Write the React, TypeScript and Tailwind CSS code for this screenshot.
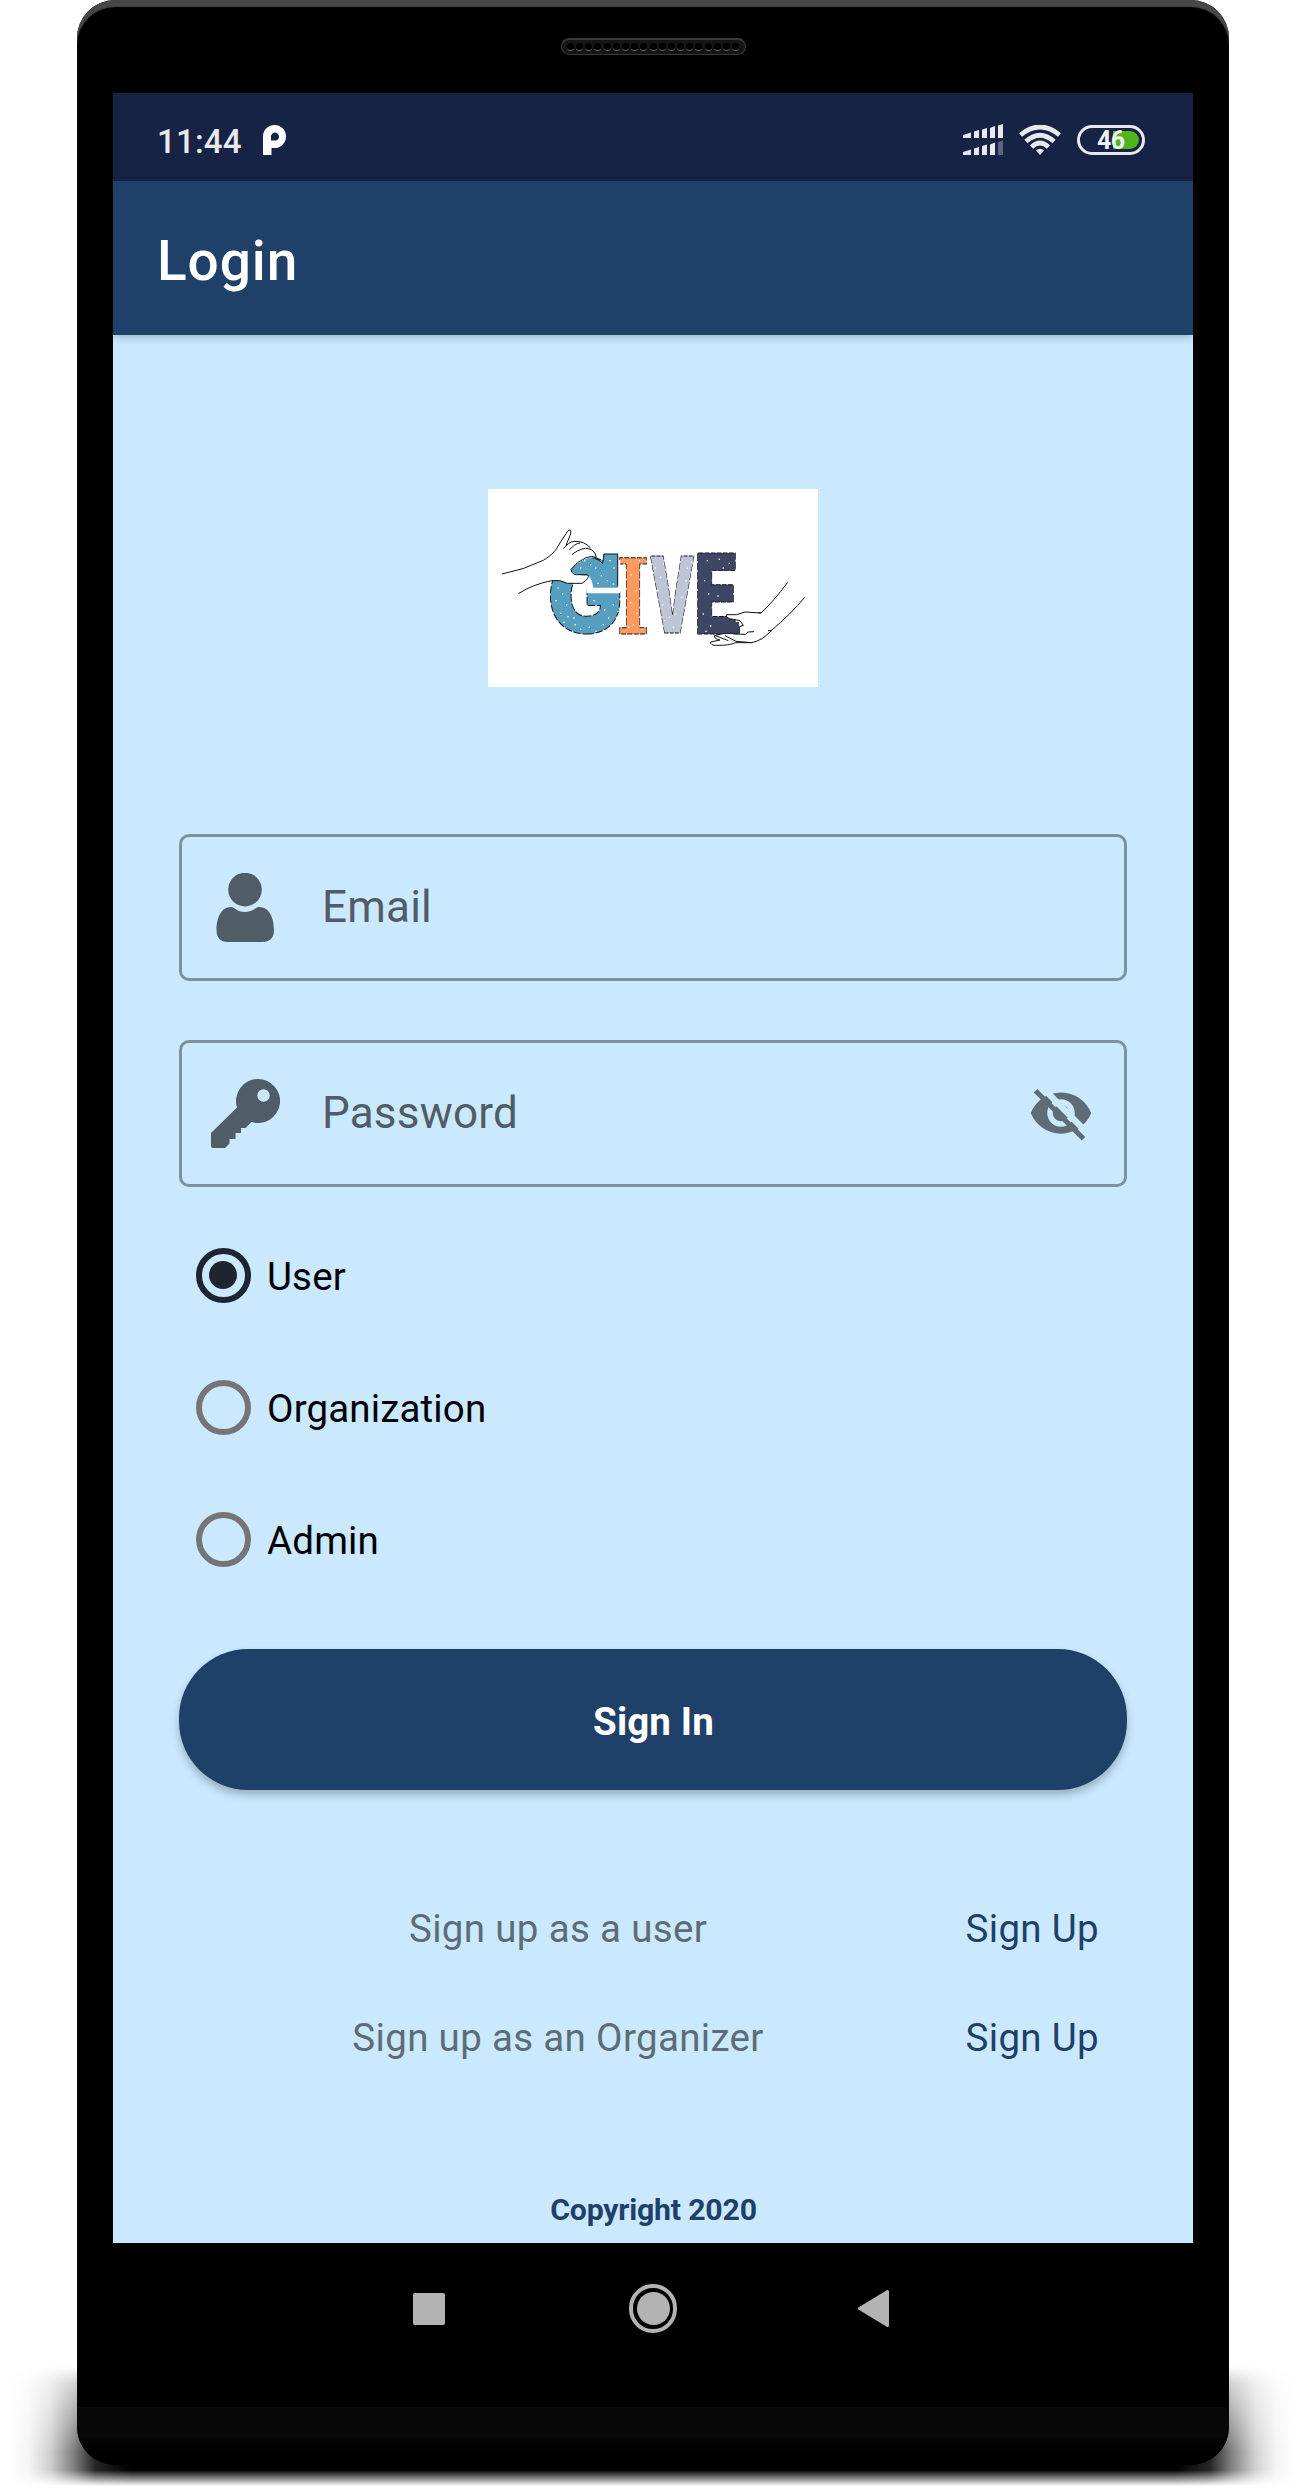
import React, { useState } from "react";

const SPECKS: [number, number][] = [
  [312, 240], [330, 252], [300, 262], [345, 262], [388, 240], [400, 262], [362, 285], [380, 300], [352, 308], [398, 310],
  [232, 322], [246, 340], [226, 360], [258, 372], [240, 398], [262, 408], [250, 425], [284, 432], [300, 446], [326, 440],
  [346, 452], [368, 432], [384, 412], [372, 388], [398, 372], [412, 392], [340, 360], [392, 436], [280, 412],
  [440, 248], [476, 240], [452, 282], [466, 330], [450, 366], [470, 398], [444, 440], [484, 446], [458, 432],
  [524, 262], [540, 290], [548, 250], [532, 330], [546, 372], [552, 420], [578, 440], [586, 400], [604, 350], [616, 300], [620, 262], [634, 244], [566, 410],
  [680, 240], [716, 236], [746, 248], [728, 262], [672, 300], [684, 340], [712, 346], [668, 400], [690, 436], [724, 446], [760, 440], [676, 452],
];

function GiveLogo() {
  return (
    <svg viewBox="24 27 990 594" className="block h-[198px] w-[330px] bg-white">
      <g strokeWidth="3" stroke="#111" strokeDasharray="22 6" fontWeight="900">
        <text transform="translate(201 459) scale(.98 1)" fontFamily="Inter" fontSize="310" fill="#569fc0">G</text>
        <text transform="translate(409 461) scale(.68 1)" fontFamily="DejaVu Serif" fontSize="316" fontWeight="700" fill="#ff9b60">I</text>
        <text transform="translate(507 459) scale(.55 1)" fontFamily="Inter" fontSize="318" fill="#bec5d6">V</text>
        <text transform="translate(643 463) scale(.65 1)" fontFamily="Inter" fontSize="332" fill="#3d4665">E</text>
      </g>
      <path fill="#fff" d="M413 240H421V340H320V323H413Z" />
      <path fill="#569fc0" d="M318 233Q346 228 368 250L372 222H413V323H340Q336 296 324 285Z" />
      <path fill="none" stroke="#111" strokeWidth="3" d="M318 233Q346 228 368 250L372 222H413V320" />
      <g fill="#fff">
        {SPECKS.map(([x, y]) => (
          <rect key={`${x}-${y}`} x={x} y={y} width="4" height="4" />
        ))}
      </g>
      <g fill="#fff" stroke="#111" strokeWidth="3" strokeLinejoin="round">
        <path
          stroke="none"
          d="M70 281Q130 268 190 241Q225 220 240 190L262 152Q272 148 272 160L264 190Q300 178 325 192Q345 205 349 232Q310 230 272 268Q276 288 322 285Q328 300 306 310L262 310Q240 298 216 302Q160 312 115 340Z"
        />
        <path
          fill="none"
          d="M66 282Q130 270 190 241Q225 220 236 195L262 155Q274 142 272 162L258 196M250 206Q266 186 282 184Q312 182 332 204M268 210Q285 190 300 189M276 223Q310 200 325 206Q345 210 349 232M349 232Q335 226 318 233Q290 245 273 268Q274 287 300 284L324 285M324 285Q330 294 306 310L262 310Q240 298 216 302Q160 312 115 341"
        />
        <path
          d="M923 307Q880 365 843 399L795 396L770 404L740 404Q736 416 760 418L780 422L790 436L778 440L778 460L730 461L704 466Q700 476 720 480L692 486Q690 496 710 496Q745 497 767 488L815 488Q850 480 870 455Q935 400 974 352"
        />
        <path fill="none" d="M843 399L834 398M735 467L768 484L815 488M822 455L804 456L796 463L760 462M704 466L745 482M864 452L876 452" />
      </g>
      <path fill="#3d4665" d="M700 426H777V460H700Z" />
    </svg>
  );
}

function UserIcon() {
  return (
    <svg viewBox="0 0 59 69" className="h-[69px] w-[59px] fill-[#505d66]">
      <circle cx="29" cy="16.6" r="16.8" />
      <path d="M15 34C18.5 34 20.5 39 29 39C37.500 39 39.500 34 43 34C54 34 58 46 58 57Q58 69 46 69H12Q.5 69 .5 57C.5 46 4.500 34 15 34Z" />
    </svg>
  );
}

function KeyIcon() {
  return (
    <svg viewBox="0 0 69 69" className="h-[69px] w-[69px] fill-[#505d66]">
      <path
        fillRule="evenodd"
        d="M47 0A22 22 0 1 1 40.500 43L34.500 49H30V54H24.500V60H18.500V64.500L14 69H2Q0 69 0 67V54L26 28.500A22 22 0 0 1 47 0ZM52.500 10.300A6.200 6.200 0 1 0 52.500 22.700A6.200 6.200 0 1 0 52.500 10.300Z"
      />
    </svg>
  );
}

function EyeOffIcon() {
  return (
    <svg viewBox="0 0 24 24" className="mb-0.5 h-[66px] w-[66px]">
      <path
        fill="#5e6c75"
        d="M12 4.500C7 4.500 2.730 7.610 1 12c1.730 4.390 6 7.500 11 7.500s9.270-3.110 11-7.500c-1.730-4.390-6-7.500-11-7.500zM12 17c-2.760 0-5-2.240-5-5s2.240-5 5-5 5 2.240 5 5-2.240 5-5 5zm0-8c-1.660 0-3 1.340-3 3s1.340 3 3 3 3-1.340 3-3-1.340-3-3-3z"
      />
      <path d="M4.600 2.100L22 19.700" stroke="#cae9ff" strokeWidth="2.300" />
      <path d="M2.750 3.900L20.200 21.400" stroke="#5e6c75" strokeWidth="1.800" />
    </svg>
  );
}

function StatusBar() {
  return (
    <div className="flex h-[88px] items-center bg-[#162345] pt-1.5 pr-12 pl-11">
      <span className="mt-[3px] text-[33px] leading-[40px] font-medium tracking-[.2px] text-[#e8e9ec]">11:44</span>
      <svg viewBox="0 0 23 30" className="ml-[21px] h-[30px] w-[23px]">
        <path fill="#fff" fillRule="evenodd" d="M0 30V11.500A11.500 11.500 0 1 1 11.500 23H8.500V30ZM8 15.500H11.500A4 4 0 1 0 8 11.500Z" />
      </svg>
      <svg viewBox="0 0 41 32" className="ml-auto h-8 w-[41px] fill-[#e8e9ec]">
        <path d="M0 11L8 8.500V14H0ZM11 7.500L16 6V14H11ZM19 5.500L24 4V14H19ZM27 4L32 2V14H27ZM35 1.500L40 0V14H35Z" />
        <path d="M0 28L8 25.500V31H0ZM11 24.500L16 23V31H11ZM19 22L24 20.500V31H19ZM27 20.500L32 18.500V31H27Z" />
        <path fill="#5c657e" d="M35 18L40 16.500V31H35Z" />
      </svg>
      <svg viewBox="0 0 42 30" className="ml-[15px] h-[30px] w-[42px]">
        <g fill="none" stroke="#e8e9ec" strokeWidth="4.800">
          <path d="M1.500 10Q21-6 40.500 10" />
          <path d="M7 16.500Q21 4 35 16.500" />
          <path d="M12.500 22Q21 14 29.500 22" />
        </g>
        <path fill="#e8e9ec" d="M17 25.500Q21 22 25 25.500L21 30Z" />
      </svg>
      <div className="relative ml-4 h-[30px] w-[68px] rounded-full border-[3px] border-[#e8e9ec]">
        <div className="absolute top-[3px] right-[3px] h-[18px] w-[26px] rounded-r-full bg-[#4fb51c]" />
        <span className="absolute top-0 left-[17px] text-[25px] leading-[25px] font-bold tracking-[-.5px] text-[#f0f2f3]">46</span>
      </div>
    </div>
  );
}

function Field({ icon, label, trailing }: { icon: React.ReactNode; label: string; trailing?: React.ReactNode }) {
  return (
    <div className="flex h-[147px] items-center rounded-[10px] border-[3px] border-[#7d919f] pr-[30px]">
      <div className="flex w-[140px] justify-center pr-[13px]">{icon}</div>
      <span className="mb-0.5 flex-1 text-[44px] leading-[52px] tracking-[.2px] text-[#505d66]">{label}</span>
      {trailing}
    </div>
  );
}

function Radio({ label, checked, onSelect }: { label: string; checked: boolean; onSelect: () => void }) {
  return (
    <button type="button" role="radio" aria-checked={checked} onClick={onSelect} className="flex h-[132px] items-center">
      <span
        className={
          checked
            ? "flex size-[55px] items-center justify-center rounded-full border-[6px] border-[#1e2430]"
            : "flex size-[55px] rounded-full border-[6px] border-[#757575]"
        }
      >
        {checked && <span className="size-7 rounded-full bg-[#1e2430]" />}
      </span>
      <span className="mt-[3px] ml-[16.500px] text-[38.5px] leading-[46px] tracking-[.15px] text-black">{label}</span>
    </button>
  );
}

function SignUpRow({ label }: { label: string }) {
  return (
    <div className="flex h-[109px] items-center whitespace-nowrap">
      <span className="w-[758px] shrink-0 text-center tracking-[.33px] text-[#5e6c75]">{label}</span>
      <a href="#" className="ml-[28.500px] tracking-[.33px] text-[#1f4068]">Sign Up</a>
    </div>
  );
}

export default function App() {
  const [role, setRole] = useState("User");
  return (
    <div className="relative h-[2490px] w-[1305px] overflow-hidden bg-white font-[Roboto,sans-serif]">
      <div className="absolute top-[2362px] left-0 h-[124px] w-full bg-[linear-gradient(to_right,transparent_8px,rgba(0,0,0,.04)_28px,rgba(0,0,0,.18)_50px,rgba(0,0,0,.5)_74px,rgba(0,0,0,.85)_95px,black_130px,black_1175px,rgba(0,0,0,.85)_1210px,rgba(0,0,0,.5)_1231px,rgba(0,0,0,.18)_1255px,rgba(0,0,0,.04)_1277px,transparent_1297px)] [mask-image:linear-gradient(to_bottom,transparent_4px,rgba(0,0,0,.35)_22px,rgba(0,0,0,.7)_60px,black_90px,black_108px,rgba(0,0,0,.5)_116px,transparent_124px)]" />

      <div className="relative ml-[77px] h-[2465px] w-[1152px] overflow-hidden rounded-[38px] bg-black px-9 shadow-[inset_0_7px_1px_#474747]">
        <div className="flex h-[93px] justify-center pt-[38px]">
          <div className="flex h-[17px] w-[185px] items-center justify-center gap-[2.200px] rounded-full border border-t-2 border-[#3a3a3a] bg-[#151515]">
            {Array.from({ length: 19 }, (_, i) => (
              <span key={i} className="h-2 w-[7px] rounded-full border-b border-[#666] bg-black" />
            ))}
          </div>
        </div>

        <div className="flex h-[2150px] flex-col bg-[#cae9ff]">
          <StatusBar />
          <header className="z-10 flex h-[154px] items-center bg-[#1f4068] pl-11 shadow-[0_3px_8px_rgba(0,0,0,.2)]">
            <h1 className="mt-1.5 text-[55px] leading-[64px] font-medium tracking-[.9px] text-white">Login</h1>
          </header>

          <main className="px-[66px]">
            <div className="flex justify-center pt-[154px]">
              <GiveLogo />
            </div>
            <div className="mt-[147px] flex flex-col gap-[59px]">
              <Field icon={<UserIcon />} label="Email" />
              <Field icon={<KeyIcon />} label="Password" trailing={<EyeOffIcon />} />
            </div>
            <div role="radiogroup" className="mt-[22px] flex flex-col items-start pl-[16.500px]">
              {["User", "Organization", "Admin"].map((r) => (
                <Radio key={r} label={r} checked={role === r} onSelect={() => setRole(r)} />
              ))}
            </div>
            <button
              type="button"
              className="mt-11 block h-[141px] w-full rounded-[69px] bg-[#1f4068] pt-1 pl-px text-[38.5px] leading-[46px] font-bold tracking-[.15px] text-white shadow-[0_5px_8px_rgba(0,0,0,.25)]"
            >
              Sign In
            </button>
            <div className="mt-[84px] text-[38.5px] leading-[46px]">
              <SignUpRow label="Sign up as a user" />
              <SignUpRow label="Sign up as an Organizer" />
            </div>
            <p className="mt-[100px] pl-px text-center text-[30.250px] leading-[36px] font-bold tracking-[-.2px] text-[#1f4068]">Copyright 2020</p>
          </main>
        </div>

        <nav className="flex h-[131px] items-center pl-[300px]">
          <button type="button" aria-label="Recent apps" className="size-8 rounded-[2px] bg-[#b3b3b3]" />
          <button type="button" aria-label="Home" className="ml-[184px] flex h-[49px] w-12 items-center justify-center rounded-full border-4 border-[#b3b3b3]">
            <span className="size-[33px] rounded-full bg-[#b3b3b3]" />
          </button>
          <button type="button" aria-label="Back" className="ml-[181px]">
            <svg viewBox="0 0 31 37" className="block h-[37px] w-[31px]">
              <path d="M1.500 18.500L29.500 1.500V35.500Z" fill="#b3b3b3" stroke="#b3b3b3" strokeWidth="3" strokeLinejoin="round" />
            </svg>
          </button>
        </nav>
        <div className="absolute inset-x-0 bottom-0 h-[58px] bg-linear-to-b from-[#080808] from-50% to-black" />
      </div>
    </div>
  );
}
